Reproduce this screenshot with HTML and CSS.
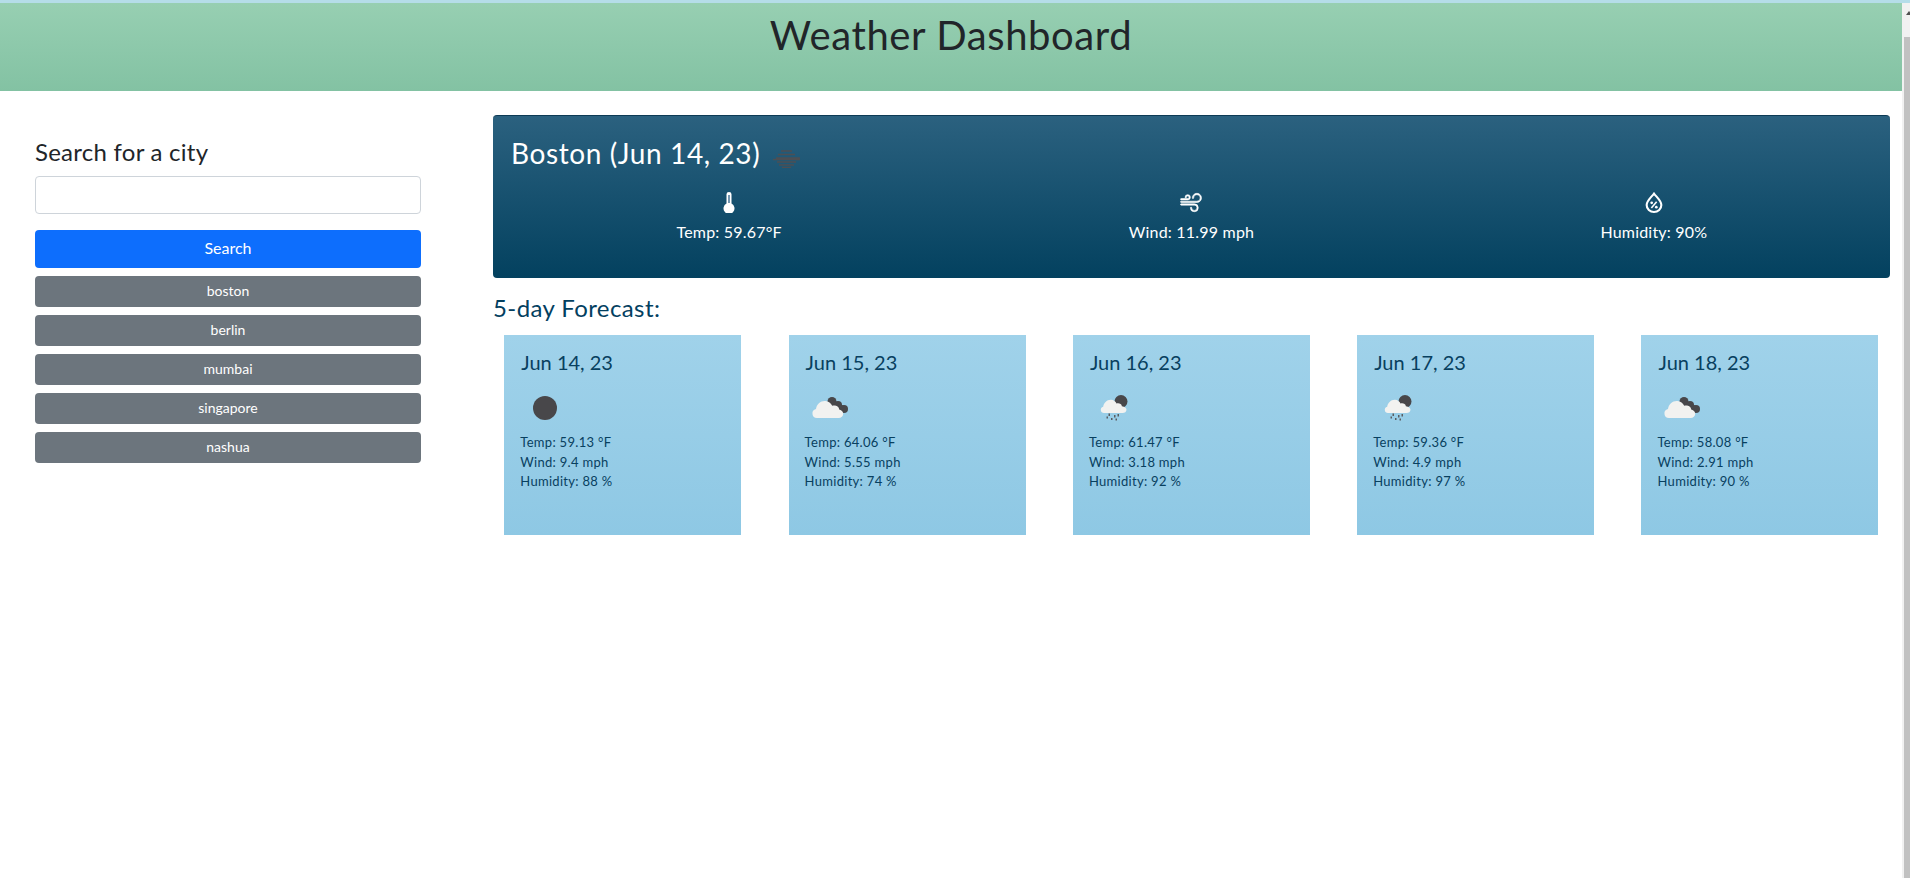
FILE: index.html
```html
<!DOCTYPE html>
<html lang="en">
<head>
<meta charset="utf-8">
<title>Weather Dashboard</title>
<link rel="stylesheet" href="styles.css">
</head>
<body>
<div class="strip"></div>
<header class="banner"><h1>Weather Dashboard</h1></header>
<div class="scrollbar"><span class="arrow"></span><div class="thumb"></div></div>
<main class="layout">
  <aside class="sidebar">
    <h2 class="side-title">Search for a city</h2>
    <input class="city-input" type="text" aria-label="City">
    <button class="btn btn-primary">Search</button>
    <div class="history">
      <button class="btn btn-city">boston</button>
      <button class="btn btn-city">berlin</button>
      <button class="btn btn-city">mumbai</button>
      <button class="btn btn-city">singapore</button>
      <button class="btn btn-city">nashua</button>
    </div>
  </aside>
  <section class="content">
    <div class="today">
      <div class="today-head">
        <h2>Boston (Jun 14, 23)</h2>
        <svg class="mist" viewBox="0 0 27 18" width="27" height="18"><g stroke="#4c4f54" stroke-width="1.4"><path d="M8 1h11M5 4.500h17M3 8h24M0 9.500h27M4 12h19M6 15h15M9 17.500h9"/></g></svg>
      </div>
      <div class="stats">
        <div class="stat">
          <svg class="stat-icon" viewBox="0 0 12 21" width="12" height="21" fill="#fff"><path d="M3.500 2.200a2.500 2.200 0 0 1 5 0v9.300a5.500 5.500 0 1 1-5 0z"/><path d="M6 3v8" stroke="#2a5f86" stroke-width="1.300"/></svg>
          <p>Temp: 59.67°F</p>
        </div>
        <div class="stat">
          <svg class="stat-icon" viewBox="0 0 16 16" width="22" height="21" fill="#fff" stroke="#fff" stroke-width=".45"><path d="M12.500 2A2.500 2.500 0 0 0 10 4.500a.5.5 0 0 1-1 0A3.500 3.500 0 1 1 12.500 8H.5a.5.5 0 0 1 0-1h12a2.500 2.500 0 0 0 0-5zm-7 1a1 1 0 0 0-1 1 .5.5 0 0 1-1 0 2 2 0 1 1 2 2h-5a.5.5 0 0 1 0-1h5a1 1 0 0 0 0-2zM0 9.500A.5.5 0 0 1 .5 9h10.042a3 3 0 1 1-3 3 .5.5 0 0 1 1 0 2 2 0 1 0 2-2H.5a.5.5 0 0 1-.5-.5z"/></svg>
          <p>Wind: 11.99 mph</p>
        </div>
        <div class="stat">
          <svg class="stat-icon" viewBox="0 0 17 20" width="18" height="21" fill="none" stroke="#fff"><path stroke-width="2" d="M8.500 1.500C6 4.800 1.500 8.500 1.500 12.300a7 6.700 0 0 0 14 0C15.500 8.500 11 4.800 8.500 1.500z"/><path stroke-width="1.500" d="M11 9.300l-5 6"/><circle cx="6.300" cy="10.300" r="1.300" fill="#fff" stroke="none"/><circle cx="10.700" cy="14.500" r="1.300" fill="#fff" stroke="none"/></svg>
          <p>Humidity: 90%</p>
        </div>
      </div>
    </div>
    <h3 class="forecast-title">5-day Forecast:</h3>
    <div class="forecast">
      <article class="day">
        <h4>Jun 14, 23</h4>
        <svg class="wx" viewBox="0 0 50 50" width="50" height="50"><circle cx="25" cy="25" r="12" fill="#48474a"/></svg>
        <p>Temp: 59.13 °F</p><p>Wind: 9.4 mph</p><p>Humidity: 88 %</p>
      </article>
      <article class="day">
        <h4>Jun 15, 23</h4>
        <svg class="wx" viewBox="0 0 50 50" width="50" height="50"><g fill="#48474a"><circle cx="27" cy="18.500" r="4.500"/><circle cx="33" cy="22" r="4"/><circle cx="39" cy="26" r="4"/><path d="M25 16l14 7-4 7-10-6z"/></g><path fill="#f2f2f0" d="M12 35a4.500 4.500 0 0 1-1-8.900C11.500 21 16 17.500 20.500 18c3 .3 5.500 2.200 6.700 4.800 2.500-1 6.800 0 7 3.600 2.800.5 4 2.500 4 4.300 0 2.400-2 4.300-4.500 4.300z"/></svg>
        <p>Temp: 64.06 °F</p><p>Wind: 5.55 mph</p><p>Humidity: 74 %</p>
      </article>
      <article class="day">
        <h4>Jun 16, 23</h4>
        <svg class="wx" viewBox="0 0 50 50" width="50" height="50"><use href="#rain-icon"/></svg>
        <p>Temp: 61.47 °F</p><p>Wind: 3.18 mph</p><p>Humidity: 92 %</p>
      </article>
      <article class="day">
        <h4>Jun 17, 23</h4>
        <svg class="wx" viewBox="0 0 50 50" width="50" height="50"><use href="#rain-icon"/></svg>
        <p>Temp: 59.36 °F</p><p>Wind: 4.9 mph</p><p>Humidity: 97 %</p>
      </article>
      <article class="day">
        <h4>Jun 18, 23</h4>
        <svg class="wx" viewBox="0 0 50 50" width="50" height="50"><g fill="#48474a"><circle cx="27" cy="18.500" r="4.500"/><circle cx="33" cy="22" r="4"/><circle cx="39" cy="26" r="4"/><path d="M25 16l14 7-4 7-10-6z"/></g><path fill="#f2f2f0" d="M12 35a4.500 4.500 0 0 1-1-8.900C11.500 21 16 17.500 20.500 18c3 .3 5.500 2.200 6.700 4.800 2.500-1 6.800 0 7 3.600 2.800.5 4 2.500 4 4.300 0 2.400-2 4.300-4.500 4.300z"/></svg>
        <p>Temp: 58.08 °F</p><p>Wind: 2.91 mph</p><p>Humidity: 90 %</p>
      </article>
    </div>
  </section>
</main>
<svg class="defs" width="0" height="0" aria-hidden="true"><defs>
  <g id="rain-icon">
    <circle cx="32" cy="18.500" r="6.500" fill="#48474a"/>
    <path fill="#f2f2f0" d="M15 30a3.200 3.200 0 0 1-.8-6.300C14.500 20 18 16.500 22 16.700c2.600.1 4.600 1.700 5.500 3.800 2-.7 5-.1 5.400 2.700 2.800.2 4.600 1.800 4.600 3.500 0 2-1.800 3.300-4 3.300z"/>
    <g fill="#5a5c60"><rect x="19.500" y="30.500" width="1.500" height="2.500"/><rect x="25" y="32" width="1.500" height="2.500"/><rect x="28.500" y="31" width="1.500" height="2.500"/><rect x="17.500" y="33.500" width="1.500" height="2"/><rect x="22" y="35" width="1.500" height="2"/><rect x="26.500" y="35.500" width="1.500" height="2"/></g>
  </g>
</defs></svg>
</body>
</html>
```
FILE: styles.css
```css
* { box-sizing: border-box; }
html, body { margin: 0; height: 100%; overflow: hidden; }
body { background: #fff; color: #212529; font-family: "Lato", "Open Sans", sans-serif; position: relative; }
.strip { height: 3px; background: #b5dde9; }
.banner {
  height: 88px; margin-right: 8px; text-align: center;
  background: linear-gradient(#97cfb2, #83c2a3);
}
.banner h1 {
  margin: 0; padding-top: 8px; font-size: 40px; line-height: 48px;
  font-weight: 400; letter-spacing: .6px; color: #212529;
}
.scrollbar { position: absolute; top: 3px; right: 0; bottom: 0; width: 8px; background: #f1f1f1; }
.arrow {
  position: absolute; top: 8px; left: 4px; width: 0; height: 0;
  border-left: 3px solid transparent; border-right: 3px solid transparent; border-bottom: 4px solid #505050;
}
.thumb { position: absolute; top: 34px; left: 2px; right: 0; bottom: 0; background: #c1c1c1; }
.layout { display: flex; align-items: flex-start; }
.sidebar { width: 493px; flex: none; padding: 46px 72px 0 35px; }
.side-title { margin: 0 0 10px; font-size: 24px; line-height: 29px; font-weight: 400; letter-spacing: .25px; color: #212529; }
.city-input { display: block; width: 100%; height: 38px; border: 1px solid #ced4da; border-radius: 4px; background: #fff; }
.btn { display: block; width: 100%; border: 0; color: #fff; font-family: inherit; border-radius: 4px; cursor: pointer; padding: 0 0 2px; }
.btn-primary { height: 38px; margin-top: 16px; background: #0d6efd; font-size: 16px; line-height: 24px; }
.history { margin-top: 8px; display: flex; flex-direction: column; gap: 8px; }
.btn-city { height: 31px; background: #6c757d; font-size: 14px; line-height: 21px; }
.content { width: 1397px; flex: none; padding-top: 24px; }
.today {
  height: 163px; padding: 0 5px; color: #fff; border-radius: 4px;
  border-top: 1px solid #0d3a55;
  background: linear-gradient(#2b617f, #03415f);
}
.today-head { display: flex; align-items: center; padding: 14px 0 0 13px; height: 60px; }
.today-head h2 { margin: 0; font-size: 28px; line-height: 34px; font-weight: 400; letter-spacing: .6px; }
.mist { margin: 12px 0 0 13px; }
.stats { display: grid; grid-template-columns: repeat(3, 1fr); text-align: center; }
.stat { display: flex; flex-direction: column; align-items: center; padding-top: 16px; }
.stat-icon { display: block; height: 21px; }
.stat p { margin: 7px 0 0; font-size: 16px; line-height: 24px; letter-spacing: .2px; }
.forecast-title { margin: 15px 0 13px; font-size: 24px; line-height: 29px; font-weight: 400; letter-spacing: .4px; color: #03405f; }
.forecast { display: flex; gap: 47.300px; margin-left: 11.300px; }
.day {
  width: 237px; height: 200px; padding: 15px 16px; color: #08405f;
  background: linear-gradient(#a0d2ea, #8ec8e4);
}
.day h4 { margin: 0; padding-left: 1px; font-size: 20px; line-height: 24px; font-weight: 400; }
.wx { display: block; margin-top: 9px; }
.day p { margin: 0; font-size: 13px; line-height: 19.500px; letter-spacing: .3px; }
.defs { position: absolute; }
```
